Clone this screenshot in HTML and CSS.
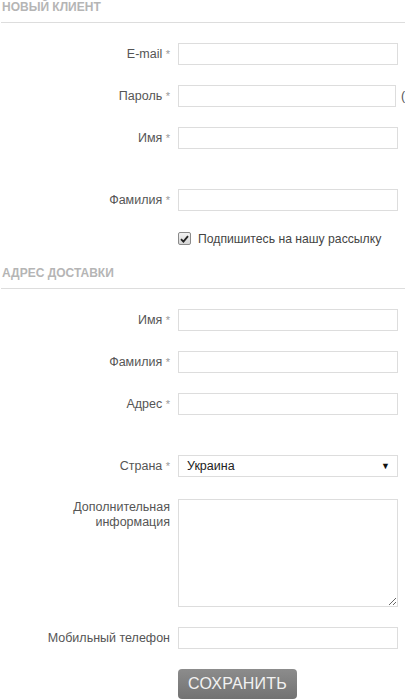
FILE: index.html
```html
<!DOCTYPE html>
<html lang="ru">
<head>
  <meta charset="UTF-8">
  <meta name="viewport" content="width=device-width, initial-scale=1.0">
  <title>Новый клиент</title>
  <link rel="stylesheet" href="styles.css">
</head>
<body>

  <form class="page">

    <!-- Новый клиент -->
    <h3 class="section-title">Новый клиент</h3>
    <div class="fields">
      <div class="row">
        <label class="label">E-mail <span class="req">*</span></label>
        <input class="field" type="text">
      </div>
      <div class="row">
        <label class="label">Пароль <span class="req">*</span></label>
        <input class="field field-short" type="password">
        <span class="hint">(минимум 6 символов)</span>
      </div>
      <div class="row">
        <label class="label">Имя <span class="req">*</span></label>
        <input class="field" type="text">
      </div>
      <div class="row row-spaced">
        <label class="label">Фамилия <span class="req">*</span></label>
        <input class="field" type="text">
      </div>
      <div class="check-row">
        <span class="checkbox">
          <svg width="9" height="8" viewBox="0 0 9 8"><path d="M1 4.2 L3.4 6.6 L8 1.2" fill="none" stroke="#222" stroke-width="1.8"/></svg>
        </span>
        <span class="check-text">Подпишитесь на нашу рассылку</span>
      </div>
    </div>

    <!-- Адрес доставки -->
    <h3 class="section-title">Адрес доставки</h3>
    <div class="fields">
      <div class="row">
        <label class="label">Имя <span class="req">*</span></label>
        <input class="field" type="text">
      </div>
      <div class="row">
        <label class="label">Фамилия <span class="req">*</span></label>
        <input class="field" type="text">
      </div>
      <div class="row">
        <label class="label">Адрес <span class="req">*</span></label>
        <input class="field" type="text">
      </div>
      <div class="row row-spaced">
        <label class="label">Страна <span class="req">*</span></label>
        <div class="select-wrap">
          <select class="field select">
            <option>Украина</option>
          </select>
          <span class="select-arrow">▼</span>
        </div>
      </div>
      <div class="row row-top">
        <label class="label">Дополнительная информация</label>
        <textarea class="field area"></textarea>
      </div>
      <div class="row">
        <label class="label">Мобильный телефон</label>
        <input class="field" type="text">
      </div>
      <div class="actions">
        <button type="button" class="button">Сохранить</button>
      </div>
    </div>

  </form>

</body>
</html>
```

FILE: styles.css
```css
html, body {
  overflow-x: hidden;
}

body {
  margin: 0;
  background: #fff;
  font-family: "Liberation Sans", Arial, sans-serif;
  font-size: 12.5px;
  color: #555;
}

.page {
  width: 404px;
  padding-left: 1px;
}

/* Section headings */
.section-title {
  margin: 0;
  padding: 0 0 8px 1px;
  font-size: 12px;
  line-height: 14px;
  font-weight: bold;
  text-transform: uppercase;
  color: #b5b5b5;
  border-bottom: 1px solid #ddd;
}

.fields {
  display: flex;
  flex-direction: column;
  gap: 20px;
  padding: 20px 0;
}

.row {
  display: flex;
  align-items: center;
  white-space: nowrap;
}

.row-spaced {
  margin-top: 20px;
}

.row-top {
  align-items: flex-start;
}

.label {
  flex: none;
  width: 169px;
  margin-right: 8px;
  text-align: right;
  line-height: 15px;
  white-space: normal;
}

.row-top .label {
  padding-top: 3px;
}

.req {
  color: #999;
  font-size: 11px;
}

.field {
  flex: none;
  box-sizing: border-box;
  width: 220px;
  height: 22px;
  margin: 0;
  padding: 2px 6px;
  border: 1px solid #ddd;
  background: #fff;
  font-family: inherit;
  font-size: 12.5px;
  color: #333;
  outline: none;
}

.field-short {
  width: 218px;
}

.hint {
  flex: none;
  margin-left: 5px;
  color: #555;
}

/* Select */
.select-wrap {
  position: relative;
  flex: none;
  width: 220px;
  height: 22px;
}

.select {
  appearance: none;
  -webkit-appearance: none;
  border-radius: 0;
  padding: 0 8px;
  color: #222;
}

.select-arrow {
  position: absolute;
  right: 8px;
  top: 6px;
  font-size: 9px;
  line-height: 10px;
  color: #111;
  pointer-events: none;
}

.area {
  height: 108px;
  margin-top: 2px;
  resize: both;
}

/* Checkbox */
.check-row {
  display: flex;
  align-items: center;
  margin-left: 177px;
  height: 15px;
  gap: 7px;
}

.checkbox {
  box-sizing: border-box;
  width: 13px;
  height: 13px;
  display: flex;
  align-items: center;
  justify-content: center;
  border: 1px solid #8a8a8a;
  border-radius: 2px;
  background: linear-gradient(#f2f2f2, #d6d6d6);
}

.check-text {
  color: #444;
  font-size: 12.2px;
}

/* Save button */
.actions {
  padding-left: 177px;
}

.button {
  width: 119px;
  height: 30px;
  padding: 0;
  border: none;
  border-radius: 4px;
  background: linear-gradient(#8c8c8c, #727272);
  color: #f2f2f2;
  font-family: "Liberation Sans", Arial, sans-serif;
  font-size: 16px;
  text-transform: uppercase;
  letter-spacing: 0.2px;
  cursor: pointer;
}
```
